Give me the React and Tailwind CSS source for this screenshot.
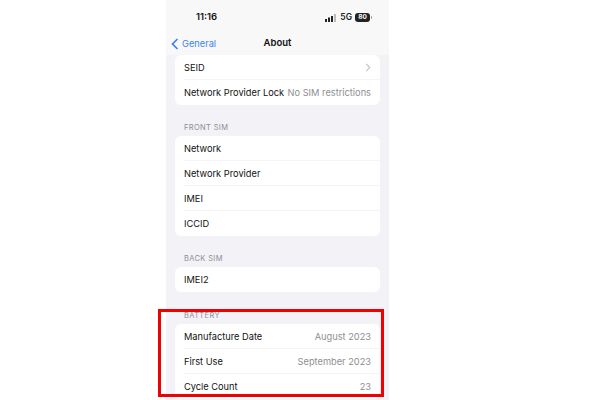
const Row = ({ label, value, chevron, last }) => (
  <div className={`flex h-[25px] items-center justify-between whitespace-nowrap pr-[9px] pt-px ${last ? "" : "border-b border-[#f4f4f6]"}`}>
    <span className="text-[9.25px] text-[#111113]">{label}</span>
    {value && <span className="text-[9.25px] text-[#8e8e93]">{value}</span>}
    {chevron && (
      <svg width="6" height="9" viewBox="0 0 6 10" fill="none" stroke="#c4c4c8" strokeWidth="1.2">
        <path d="M1 1l4 4-4 4" />
      </svg>
    )}
  </div>
);

const Group = ({ title, children }) => (
  <div>
    {title && <div className="mb-px h-[14px] pl-[18px] text-[7.5px] leading-[14px] tracking-[0.35px] text-[#8f8f94]">{title}</div>}
    <div className="mx-[9px] rounded-[6px] bg-white pl-[9px]">{children}</div>
  </div>
);

export default function App() {
  return (
    <div className="relative h-[400px] w-[600px] overflow-hidden bg-white font-['Inter',sans-serif]">
      <div className="ml-[166px] flex h-[400px] w-[223px] flex-col bg-[#f2f2f7]">
        <div className="h-[55px] shrink-0 bg-[#f8f8f8]">
          <div className="flex h-[34px] items-center justify-between pl-[30px] pr-[17px] pt-[1px]">
            <span className="text-[9.5px] font-semibold text-[#111]">11:16</span>
            <div className="flex items-center gap-[3px]">
              <svg width="12" height="8" viewBox="0 0 12 8" fill="#222">
                <rect x="0" y="5" width="2" height="3" />
                <rect x="3" y="3.5" width="2" height="4.5" />
                <rect x="6" y="2" width="2" height="6" />
                <rect x="9" y="0" width="2" height="8" fill="#bbb" />
              </svg>
              <span className="text-[8.5px] font-semibold text-[#222]">5G</span>
              <div className="flex items-center gap-px">
                <span className="flex h-[9px] w-[15px] items-center justify-center rounded-[3px] bg-[#222] text-[6.5px] font-bold text-white">80</span>
                <span className="h-[3px] w-px rounded-r-sm bg-[#999]" />
              </div>
            </div>
          </div>
          <div className="relative flex h-[18px] items-center justify-center pt-px">
            <div className="absolute left-[5px] flex items-center gap-[3px]">
              <svg width="8" height="12" viewBox="0 0 8 12" fill="none" stroke="#3b82f6" strokeWidth="1.7">
                <path d="M6.5 1L1.5 6l5 5" />
              </svg>
              <span className="text-[9.25px] text-[#3b82f6]">General</span>
            </div>
            <span className="text-[9.5px] font-semibold text-[#111]">About</span>
          </div>
        </div>

        <div className="flex flex-col">
          <Group>
            <Row label="SEID" chevron />
            <Row label="Network Provider Lock" value="No SIM restrictions" last />
          </Group>
          <div className="h-[16px]" />
          <Group title="FRONT SIM">
            <Row label="Network" />
            <Row label="Network Provider" />
            <Row label="IMEI" />
            <Row label="ICCID" last />
          </Group>
          <div className="h-[16px]" />
          <Group title="BACK SIM">
            <Row label="IMEI2" last />
          </Group>
          <div className="h-[17px]" />
          <Group title="BATTERY">
            <Row label="Manufacture Date" value="August 2023" />
            <Row label="First Use" value="September 2023" />
            <Row label="Cycle Count" value="23" last />
          </Group>
        </div>
      </div>
      <div className="absolute left-[158px] top-[309px] h-[88px] w-[226px] border-[3px] border-[#f00000]" />
    </div>
  );
}
